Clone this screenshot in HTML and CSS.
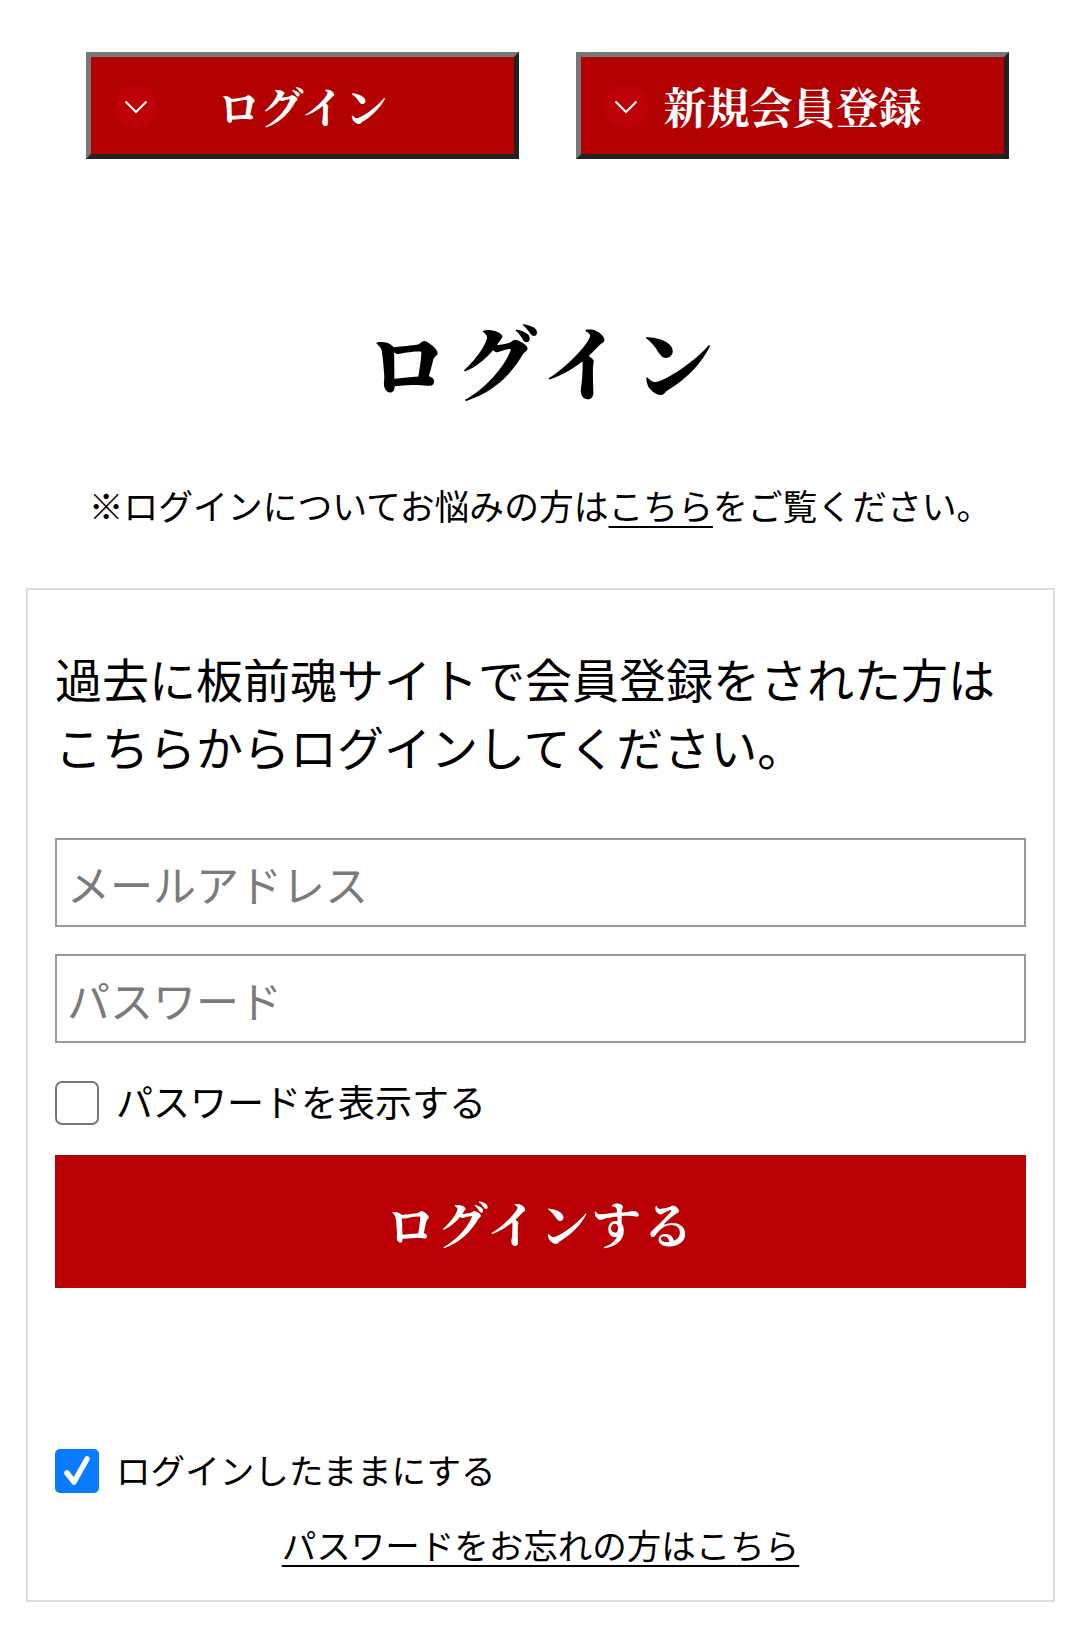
FILE: index.html
```html
<!DOCTYPE html>
<html lang="ja">
<head>
<meta charset="utf-8">
<title>ログイン</title>
<link rel="stylesheet" href="styles.css">
</head>
<body>
<nav class="nav">
  <a class="nav-btn" href="#login">
    <span class="chev"><svg width="24" height="14" viewBox="0 0 24 14"><path d="M1.5 1.5 L12 12 L22.5 1.5" fill="none" stroke="#fff" stroke-width="2"/></svg></span>
    <span class="nav-label">ログイン</span>
  </a>
  <a class="nav-btn" href="#register">
    <span class="chev"><svg width="24" height="14" viewBox="0 0 24 14"><path d="M1.5 1.5 L12 12 L22.5 1.5" fill="none" stroke="#fff" stroke-width="2"/></svg></span>
    <span class="nav-label">新規会員登録</span>
  </a>
</nav>

<h1 class="title">ログイン</h1>
<p class="notice">※ログインについてお悩みの方は<a class="ul" href="#">こちら</a>をご覧ください。</p>

<section class="card">
  <p class="lead">過去に板前魂サイトで会員登録をされた方はこちらからログインしてください。</p>
  <input class="field" type="text" placeholder="メールアドレス">
  <input class="field field-pw" type="password" placeholder="パスワード">
  <label class="check-row check-show">
    <span class="box"></span>
    <span class="check-label label-show">パスワードを表示する</span>
  </label>
  <button class="submit" type="button">ログインする</button>
  <label class="check-row check-keep">
    <span class="box box-on"><svg width="26" height="30" viewBox="0 0 26 30"><path d="M3 17 L10 26 L23 3" fill="none" stroke="#fff" stroke-width="5.5" stroke-linecap="round" stroke-linejoin="round"/></svg></span>
    <span class="check-label">ログインしたままにする</span>
  </label>
  <p class="forgot"><a class="ul" href="#">パスワードをお忘れの方はこちら</a></p>
</section>
</body>
</html>
```

FILE: styles.css
```css
* { box-sizing: border-box; }
html, body { margin: 0; padding: 0; background: #fff; }
body {
  font-family: "Noto Sans CJK JP", "Noto Sans", sans-serif;
  color: #000;
  width: 1080px;
}

.nav {
  display: flex;
  gap: 57px;
  padding: 52px 0 0 86px;
}
.nav-btn {
  position: relative;
  width: 433px;
  height: 107px;
  display: flex;
  align-items: center;
  justify-content: center;
  background: #b30000;
  border-style: solid;
  border-width: 5px;
  border-color: #777 #222 #222 #777;
  color: #fff;
  text-decoration: none;
}
.chev {
  position: absolute;
  left: 23px;
  top: 50%;
  margin-top: -22px;
  width: 44px;
  height: 44px;
  border-radius: 50%;
  background: #be0008;
  display: flex;
  align-items: center;
  justify-content: center;
  padding-top: 2px;
}
.chev svg { display: block; }
.nav-label {
  font-family: "Noto Serif CJK JP", "Noto Sans CJK JP", serif;
  font-weight: 700;
  font-size: 43px;
  line-height: 1;
}

.title {
  margin: 161px 0 0;
  padding-left: 10px;
  text-align: center;
  font-family: "Noto Serif CJK JP", "Noto Sans CJK JP", serif;
  font-weight: 900;
  font-size: 80px;
  line-height: 80px;
  letter-spacing: 10px;
}

.notice {
  margin: 80px 0 0;
  text-align: center;
  font-size: 34.8px;
  line-height: 51px;
}
.ul { color: #000; text-decoration: underline; text-underline-offset: 6px; text-decoration-thickness: 2px; }

.card {
  margin: 57px 25px 0 26px;
  border: 2px solid #dedede;
  padding: 54px 27px 30px;
  display: flex;
  flex-direction: column;
}
.lead {
  margin: 0;
  font-size: 47px;
  line-height: 68px;
}
.field {
  display: block;
  width: 100%;
  height: 89px;
  margin: 58px 0 0;
  border: 2px solid #999;
  border-radius: 0;
  padding: 0 10px;
  font-family: "Noto Sans CJK JP", sans-serif;
  font-size: 43px;
  color: #000;
  background: #fff;
  outline: none;
}
.field::placeholder { color: #7a7a7a; }
.field-pw { margin-top: 27px; }

.check-row {
  display: flex;
  align-items: center;
  gap: 17px;
  height: 44px;
}
.check-show { margin-top: 38px; }
.check-keep { margin-top: 161px; }
.box {
  width: 44px;
  height: 44px;
  border: 2px solid #777;
  border-radius: 7px;
  flex: none;
  display: flex;
  align-items: center;
  justify-content: center;
}
.box-on {
  background: #0a7aff;
  border-color: #0a7aff;
  border-radius: 5px;
}
.box-on svg { display: block; }
.check-label {
  font-size: 34.6px;
  line-height: 44px;
  padding-bottom: 4px;
}
.label-show { font-size: 37px; }

.submit {
  margin-top: 30px;
  height: 133px;
  width: 100%;
  border: 0;
  background: #b80005;
  color: #fff;
  font-family: "Noto Serif CJK JP", "Noto Sans CJK JP", serif;
  font-weight: 700;
  font-size: 50px;
  letter-spacing: 2px;
}

.forgot {
  margin: 26px 0 0;
  text-align: center;
  font-size: 34.5px;
  line-height: 51px;
}
```
